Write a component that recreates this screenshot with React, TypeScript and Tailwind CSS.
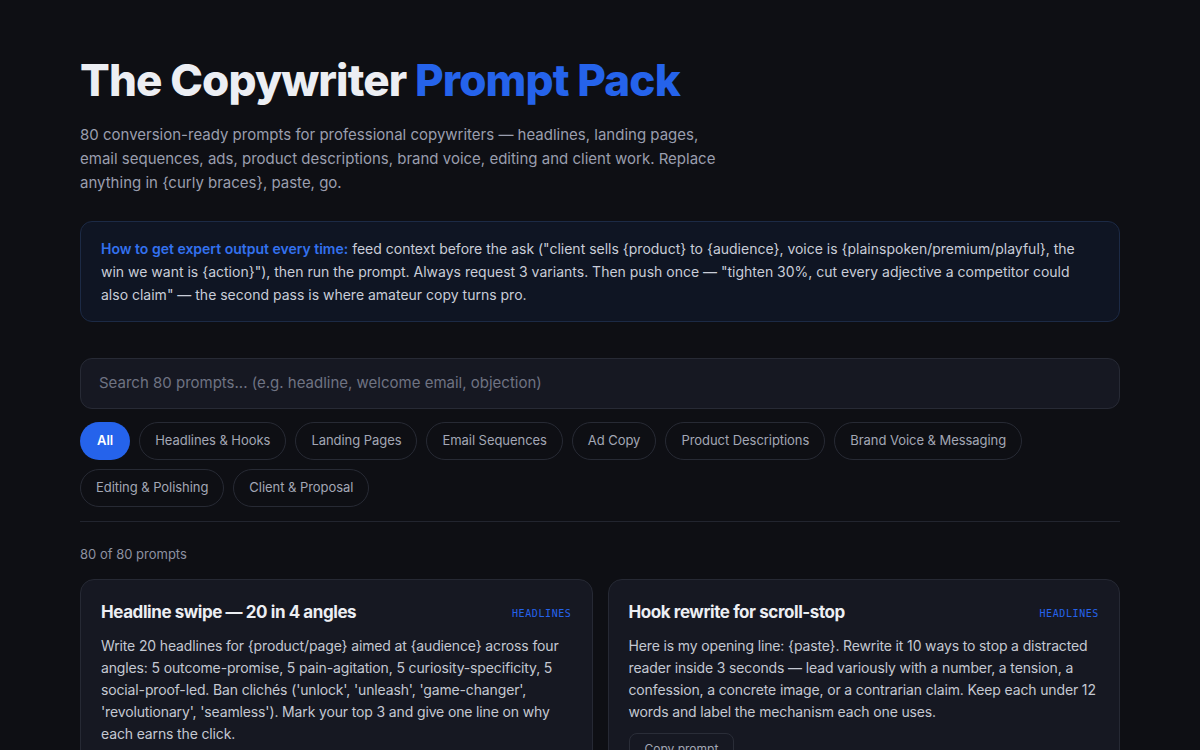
import React from "react";

const categories = [
  "All",
  "Headlines & Hooks",
  "Landing Pages",
  "Email Sequences",
  "Ad Copy",
  "Product Descriptions",
  "Brand Voice & Messaging",
  "Editing & Polishing",
  "Client & Proposal",
];

const prompts = [
  {
    title: "Headline swipe — 20 in 4 angles",
    tag: "HEADLINES",
    body: "Write 20 headlines for {product/page} aimed at {audience} across four angles: 5 outcome-promise, 5 pain-agitation, 5 curiosity-specificity, 5 social-proof-led. Ban clichés ('unlock', 'unleash', 'game-changer', 'revolutionary', 'seamless'). Mark your top 3 and give one line on why each earns the click.",
  },
  {
    title: "Hook rewrite for scroll-stop",
    tag: "HEADLINES",
    body: "Here is my opening line: {paste}. Rewrite it 10 ways to stop a distracted reader inside 3 seconds — lead variously with a number, a tension, a confession, a concrete image, or a contrarian claim. Keep each under 12 words and label the mechanism each one uses.",
  },
  {
    title: "Landing page hero block",
    tag: "LANDING",
    body: "Draft the hero for {product}: headline, subhead, primary CTA and one line of proof. Give three versions with different promises.",
  },
  {
    title: "Objection-crushing FAQ",
    tag: "LANDING",
    body: "List the 8 objections {audience} has about {product} and answer each in two sentences that a skeptic would accept.",
  },
];

const sans = "font-['Inter','Noto_Sans',sans-serif]";

export default function App() {
  return (
    <div className={`min-h-screen w-full bg-[#0e0f14] ${sans}`}>
      <div className="mx-auto w-[1040px] pt-[55px] pb-10">
        <h1 className="text-[44px] font-extrabold leading-[50px] tracking-[-0.02em] text-[#eceef3]">
          The Copywriter <span className="text-[#2563eb]">Prompt Pack</span>
        </h1>
        <p className="mt-[18px] max-w-[660px] text-[15px] leading-[24px] text-[#9a9eae]">
          80 conversion-ready prompts for professional copywriters — headlines, landing pages,
          email sequences, ads, product descriptions, brand voice, editing and client work. Replace
          anything in {"{curly braces}"}, paste, go.
        </p>

        <div className="mt-[26px] rounded-xl border border-[#1c2a45] bg-[#0f1523] px-5 py-[15px] text-[14px] leading-[23px] text-[#c9cdd8]">
          <span className="font-semibold text-[#3371ee]">How to get expert output every time:</span>{" "}
          feed context before the ask ("client sells {"{product}"} to {"{audience}"}, voice is{" "}
          {"{plainspoken/premium/playful}"}, the win we want is {"{action}"}"), then run the prompt.
          Always request 3 variants. Then push once — "tighten 30%, cut every adjective a
          competitor could also claim" — the second pass is where amateur copy turns pro.
        </div>

        <div className="mt-[36px] flex h-[51px] items-center rounded-xl border border-[#272a35] bg-[#161822] px-[18px]">
          <input
            className="w-full bg-transparent text-[15px] text-[#d5d8e0] outline-none placeholder:text-[#6f7382]"
            placeholder="Search 80 prompts... (e.g. headline, welcome email, objection)"
          />
        </div>

        <div className="mt-[13px] flex flex-wrap gap-[9px] border-b border-[#22252f] pb-[14px]">
          {categories.map((c, i) =>
            i === 0 ? (
              <button
                key={c}
                className="h-[38px] rounded-full bg-[#2563eb] px-[17px] text-[13px] font-semibold text-white"
              >
                {c}
              </button>
            ) : (
              <button
                key={c}
                className="h-[38px] rounded-full border border-[#272a34] bg-transparent px-[15px] text-[13px] tracking-[-0.004em] text-[#a3a7b5]"
              >
                {c}
              </button>
            )
          )}
        </div>

        <div className="mt-[23px] text-[13px] leading-[18px] text-[#8d91a0]">80 of 80 prompts</div>

        <div className="mt-[16px] grid grid-cols-2 gap-[15px]">
          {prompts.map((p) => (
            <div
              key={p.title}
              className="flex flex-col rounded-[14px] border border-[#262934] bg-[#161822] px-5 pt-[20px] pb-5"
            >
              <div className="flex items-center justify-between">
                <h3 className="text-[17px] font-bold leading-[24px] tracking-[-0.025em] text-[#eceef3]">
                  {p.title}
                </h3>
                <span className="pt-[3px] font-['DejaVu_Sans_Mono',monospace] text-[10px] tracking-[0.06em] text-[#2563eb]">
                  {p.tag}
                </span>
              </div>
              <p className="mt-[11px] text-[14px] leading-[22px] tracking-[-0.01em] text-[#c4c8d2]">
                {p.body}
              </p>
              <div className="mt-[10px]">
                <button className="h-[32px] rounded-lg border border-[#2a2d38] px-[15px] text-[12px] text-[#a3a7b5]">
                  Copy prompt
                </button>
              </div>
            </div>
          ))}
        </div>
      </div>
    </div>
  );
}
